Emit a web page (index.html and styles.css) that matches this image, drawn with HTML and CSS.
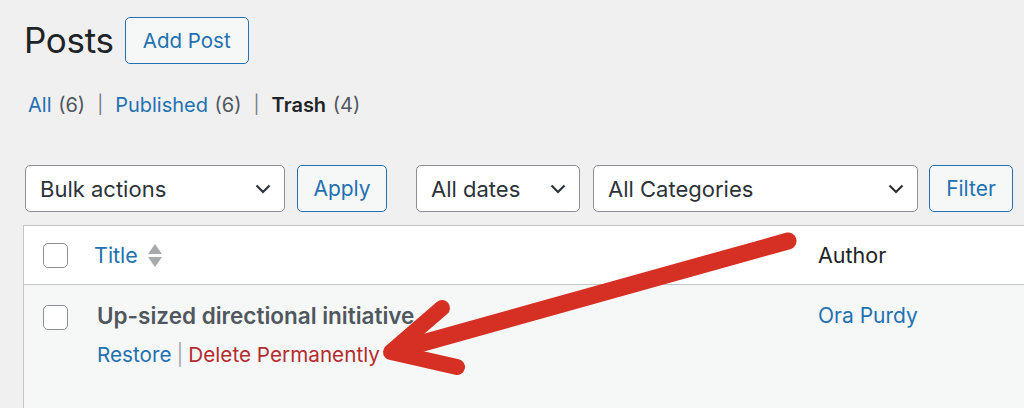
FILE: index.html
```html
<!DOCTYPE html>
<html>
<head>
<meta charset="utf-8">
<link rel="stylesheet" href="styles.css">
</head>
<body>
<div class="wrap">
  <div class="page-head">
    <h1 class="page-title">Posts</h1>
    <a class="btn-outline add-post">Add Post</a>
  </div>
  <ul class="subsubsub">
    <li><a class="link">All</a> <span class="count">(6)</span></li>
    <li class="sep">|</li>
    <li><a class="link">Published</a> <span class="count">(6)</span></li>
    <li class="sep">|</li>
    <li><b class="current">Trash</b> <span class="count">(4)</span></li>
  </ul>
  <div class="toolbar">
    <div class="select sel-bulk"><span>Bulk actions</span><svg class="chev" viewBox="0 0 16 10"><path d="M1.5 1.5 L8 8 L14.5 1.5"/></svg></div>
    <a class="btn-outline btn-apply">Apply</a>
    <div class="select sel-dates"><span>All dates</span><svg class="chev" viewBox="0 0 16 10"><path d="M1.5 1.5 L8 8 L14.5 1.5"/></svg></div>
    <div class="select sel-cats"><span>All Categories</span><svg class="chev" viewBox="0 0 16 10"><path d="M1.5 1.5 L8 8 L14.5 1.5"/></svg></div>
    <a class="btn-outline btn-filter">Filter</a>
  </div>
  <div class="table">
    <div class="thead">
      <div class="cell cb"><span class="checkbox"></span></div>
      <div class="cell col-title"><a class="link">Title</a><span class="sorter"><i class="up"></i><i class="down"></i></span></div>
      <div class="cell col-author">Author</div>
    </div>
    <div class="trow">
      <div class="cell cb"><span class="checkbox"></span></div>
      <div class="cell col-title">
        <strong class="row-title">Up-sized directional initiative</strong>
        <div class="row-actions"><a class="link">Restore</a><span class="bar">|</span><a class="delete">Delete Permanently</a></div>
      </div>
      <div class="cell col-author"><a class="link">Ora Purdy</a></div>
    </div>
  </div>
</div>
<svg class="arrow" viewBox="0 0 1024 408" width="1024" height="408">
  <path d="M788 241 L394 351" stroke-width="17"/>
  <path d="M442 308 L391 352 L457 367" stroke-width="16"/>
</svg>
</body>
</html>
```
FILE: styles.css
```css
html, body {
  margin: 0;
  padding: 0;
  background: #f0f0f1;
  overflow: hidden;
  width: 1024px;
  height: 408px;
}
body {
  font-family: "Inter", "Liberation Sans", sans-serif;
  color: #1d2327;
  position: relative;
}
.wrap {
  padding-left: 23px;
}
.link { color: #2271b1; text-decoration: none; }

.page-head {
  display: flex;
  align-items: center;
  gap: 11px;
  padding-top: 17px;
  height: 47px;
}
.page-title {
  margin: 0 0 0 1px;
  font-size: 35px;
  font-weight: 400;
  line-height: 47px;
  letter-spacing: -0.3px;
}
.btn-outline {
  display: flex;
  align-items: center;
  justify-content: center;
  box-sizing: border-box;
  height: 47px;
  border: 1.5px solid #2271b1;
  border-radius: 5px;
  background: #f6f7f7;
  color: #2271b1;
  font-size: 20.5px;
}
.add-post { width: 124px; }

.subsubsub {
  list-style: none;
  margin: 27px 0 0 5px;
  padding: 0;
  display: flex;
  gap: 12px;
  font-size: 20px;
  line-height: 28px;
}
.subsubsub .count { color: #50575e; margin-left: 1px; }
.subsubsub .sep { color: #787c82; font-size: 18px; }
.subsubsub .current { font-weight: 600; color: #1d2327; }

.toolbar {
  display: flex;
  align-items: center;
  margin-top: 46px;
  margin-left: 2px;
  height: 47px;
}
.select {
  box-sizing: border-box;
  height: 47px;
  border: 1.5px solid #8c8f94;
  border-radius: 5px;
  background: #fff;
  display: flex;
  align-items: center;
  justify-content: space-between;
  padding: 0 13px 0 14px;
  font-size: 22px;
  color: #2c3338;
}
.chev {
  width: 16px;
  height: 10px;
  fill: none;
  stroke: #2c3338;
  stroke-width: 2.2;
}
.sel-bulk { width: 260px; }
.btn-apply { width: 90px; margin-left: 12px; font-size: 21px; }
.sel-dates { width: 164px; margin-left: 29px; }
.sel-cats { width: 325px; margin-left: 13px; }
.btn-filter { width: 84px; margin-left: 11px; font-size: 21px; }

.table {
  margin-top: 13px;
  width: 1060px;
  border: 1px solid #c3c4c7;
  background: #f6f7f7;
  height: 300px;
}
.thead, .trow {
  display: grid;
  grid-template-columns: 60px 724px 1fr;
}
.thead {
  background: #fff;
  height: 58px;
  border-bottom: 1px solid #c3c4c7;
  align-items: center;
  font-size: 21.5px;
}
.cell { box-sizing: border-box; }
.cb { padding-left: 19px; }
.checkbox {
  display: block;
  box-sizing: border-box;
  width: 25px;
  height: 25px;
  border: 1.5px solid #8c8f94;
  border-radius: 5px;
  background: #fff;
}
.thead .col-title {
  padding-left: 10px;
  display: flex;
  align-items: center;
}
.sorter {
  display: flex;
  flex-direction: column;
  gap: 3px;
  margin-left: 10px;
}
.sorter i {
  display: block;
  width: 0;
  height: 0;
  border-left: 7px solid transparent;
  border-right: 7px solid transparent;
}
.sorter .up { border-bottom: 10px solid #a7aaad; }
.sorter .down { border-top: 10px solid #a7aaad; }
.col-author { padding-left: 10px; }
.thead .col-author { color: #1d2327; }

.trow .cb { padding-top: 20px; }
.trow .col-title { padding: 17px 0 0 13px; }
.trow .col-author { padding-top: 17px; font-size: 21px; }
.row-title {
  display: block;
  font-size: 22.5px;
  font-weight: 600;
  color: #50575e;
  line-height: 28px;
}
.row-actions {
  margin-top: 11px;
  font-size: 20.7px;
  line-height: 28px;
  display: flex;
  align-items: center;
}
.row-actions .bar { color: #a7aaad; margin: 0 5px; }
.row-actions .delete { color: #b32d2e; }
.trow .col-author .link { line-height: 28px; display: block; }

.arrow {
  position: absolute;
  left: 0;
  top: 0;
  pointer-events: none;
}
.arrow path {
  fill: none;
  stroke: #d63024;
  stroke-linecap: round;
  stroke-linejoin: round;
}
```
